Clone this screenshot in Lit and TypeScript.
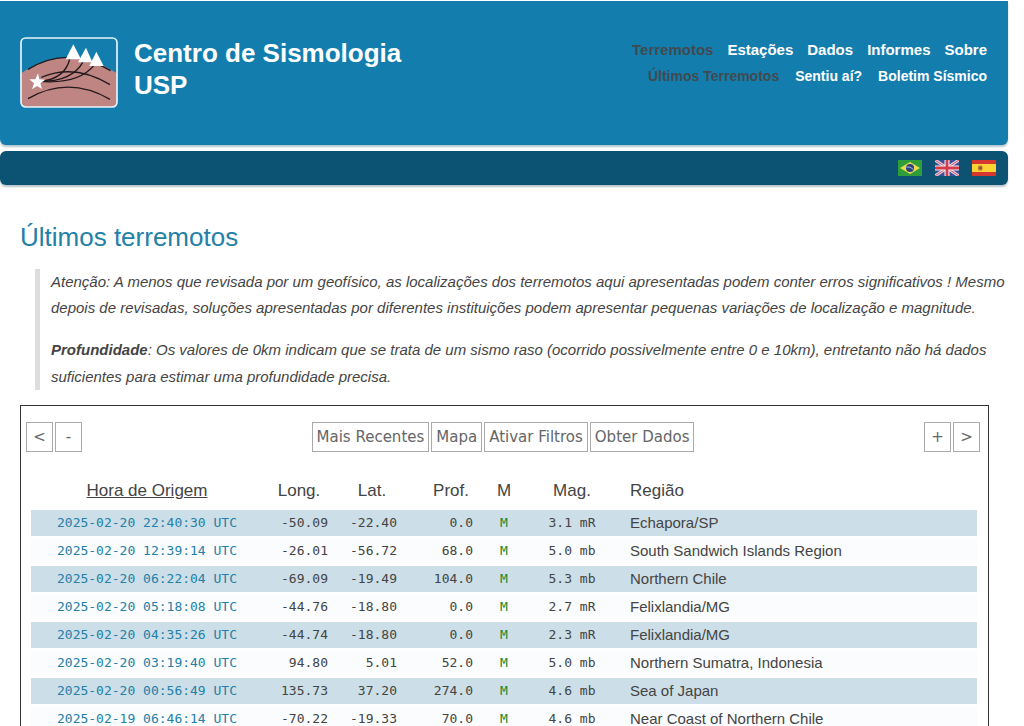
import { LitElement, html, css, svg } from "lit";
import { customElement, state } from "lit/decorators.js";

interface Quake {
  time: string;
  lon: string;
  lat: string;
  depth: string;
  mag: string;
  region: string;
}

const QUAKES: Quake[] = [
  { time: "2025-02-20 22:40:30 UTC", lon: "-50.09", lat: "-22.40", depth: "0.0", mag: "3.1 mR", region: "Echapora/SP" },
  { time: "2025-02-20 12:39:14 UTC", lon: "-26.01", lat: "-56.72", depth: "68.0", mag: "5.0 mb", region: "South Sandwich Islands Region" },
  { time: "2025-02-20 06:22:04 UTC", lon: "-69.09", lat: "-19.49", depth: "104.0", mag: "5.3 mb", region: "Northern Chile" },
  { time: "2025-02-20 05:18:08 UTC", lon: "-44.76", lat: "-18.80", depth: "0.0", mag: "2.7 mR", region: "Felixlandia/MG" },
  { time: "2025-02-20 04:35:26 UTC", lon: "-44.74", lat: "-18.80", depth: "0.0", mag: "2.3 mR", region: "Felixlandia/MG" },
  { time: "2025-02-20 03:19:40 UTC", lon: "94.80", lat: "5.01", depth: "52.0", mag: "5.0 mb", region: "Northern Sumatra, Indonesia" },
  { time: "2025-02-20 00:56:49 UTC", lon: "135.73", lat: "37.20", depth: "274.0", mag: "4.6 mb", region: "Sea of Japan" },
  { time: "2025-02-19 06:46:14 UTC", lon: "-70.22", lat: "-19.33", depth: "70.0", mag: "4.6 mb", region: "Near Coast of Northern Chile" },
];

const logo = html`<svg class="logo" viewBox="60 53 294 213" aria-hidden="true">
  <defs><clipPath id="frame"><rect x="63" y="56" width="288" height="207" rx="14" /></clipPath></defs>
  <g clip-path="url(#frame)">
    <path d="M60 164 Q205 66 354 164 V266 H60 Z" fill="#bf8583" />
    <g fill="none" stroke="#24191c" stroke-width="4">
      <path d="M84 150 Q205 76 332 154" />
      <path d="M124 174 Q225 132 330 196" />
      <path d="M84 238 Q205 168 330 240" />
      <path d="M118 186 Q196 180 210 116" />
      <path d="M118 186 Q216 188 250 126" />
      <path d="M118 186 Q236 196 284 136" />
    </g>
  </g>
  <g fill="#fff">
    <path d="M220 75 L243 120 H197 Z" />
    <path d="M258 85 L277 129 H234 Z" />
    <path d="M289 97 L311 140 H268 Z" />
    <path d="M114 162 L118 180 L136 181 L121 192 L126 209 L111 200 L96 210 L102 192 L88 180 L106 180 Z" />
  </g>
  <rect x="63" y="56" width="288" height="207" rx="14" fill="none" stroke="#e9f4fa" stroke-width="5" />
</svg>`;

const brazil = svg`<rect width="24" height="16" fill="#2f9e3a"/><path d="M12 2 L22 8 L12 14 L2 8 Z" fill="#e9dc4a"/><circle cx="12" cy="8" r="4" fill="#2b3f82"/><path d="M8.300 7 Q12 6 15.500 9.500" stroke="#a9b8d4" stroke-width="1" fill="none"/>`;
const britain = svg`<rect width="24" height="16" fill="#3d4f96"/><path d="M0 0 L24 16 M24 0 L0 16" stroke="#e6dce8" stroke-width="3"/><path d="M0 0 L24 16 M24 0 L0 16" stroke="#d4485a" stroke-width="1"/><path d="M12 0 V16 M0 8 H24" stroke="#f4eef2" stroke-width="5"/><path d="M12 0 V16 M0 8 H24" stroke="#d33c4c" stroke-width="2.800"/>`;
const spain = svg`<rect width="24" height="16" fill="#d5362f"/><rect y="4" width="24" height="8" fill="#fbd334"/><rect x="6" y="5.500" width="4.500" height="5" rx="1.500" fill="#b9752f"/><rect x="7.500" y="7" width="2" height="2" fill="#8f4a3c"/>`;

const FLAGS = [
  { label: "Português", art: brazil },
  { label: "English", art: britain },
  { label: "Español", art: spain },
];

@customElement("app-root")
export class AppRoot extends LitElement {
  @state() private quakes = QUAKES;

  static styles = css`
    :host {
      display: block;
      padding: 1px 16px 0 0;
      background: #fff;
      color: #444;
      font-family: "Liberation Sans", Arial, sans-serif;
      font-size: 15px;
    }
    a { color: inherit; text-decoration: none; }
    .masthead {
      display: flex;
      justify-content: space-between;
      align-items: flex-start;
      box-sizing: border-box;
      min-height: 144px;
      padding: 36px 21px 36px 20px;
      background: #137eae;
      color: #fff;
      border-radius: 0 0 6px 6px;
      box-shadow: 0 2px 2px #b4c6d0;
    }
    .brand { display: flex; gap: 16px; }
    .logo { display: block; width: 98px; height: 71px; }
    .name { margin: 0; font-size: 26px; line-height: 32px; font-weight: bold; }
    .menu { display: flex; flex-direction: column; font-weight: bold; line-height: 26px; }
    .menu ul {
      display: flex;
      justify-content: flex-end;
      gap: 14px;
      margin: 0;
      padding: 0;
      list-style: none;
    }
    .menu .submenu { gap: 16px; font-size: 14px; }
    .current { color: #404a50; }
    .languages {
      display: flex;
      justify-content: flex-end;
      align-items: center;
      gap: 13px;
      height: 34px;
      margin-top: 6px;
      padding: 0 12px;
      background: #0c5373;
      border-radius: 6px;
      box-shadow: 0 2px 2px #b9c3c9;
    }
    .flag { display: block; width: 24px; height: 16px; }
    main { padding: 36px 19px 0 20px; }
    h2 { margin: 0; color: #2380a8; font-size: 26px; line-height: 32px; font-weight: normal; }
    blockquote {
      display: flex;
      flex-direction: column;
      gap: 15px;
      margin: 16px -16px 15px 15px;
      padding: 0 0 0 11px;
      border-left: 5px solid #ddd;
      font-style: italic;
      line-height: 27px;
    }
    blockquote p { margin: 0; }
    blockquote p:first-child { line-height: 26px; }
    .panel { padding: 16px 8px 10px 5px; border: 1px solid #333; }
    .tools { display: flex; justify-content: space-between; }
    .group { display: flex; gap: 2px; }
    button {
      height: 30px;
      min-width: 27px;
      padding: 0 4px;
      border: 1px solid #aaa;
      background: #fff;
      color: #666;
      font-family: "DejaVu Sans", Verdana, sans-serif;
      font-size: 15px;
    }
    table {
      width: calc(100% - 8px);
      margin: 22px 3px 0 5px;
      table-layout: fixed;
      border-collapse: separate;
      border-spacing: 0 2px;
    }
    .c-time { width: 232px; }
    .c-lon { width: 72px; }
    .c-lat { width: 74px; }
    .c-depth { width: 84px; }
    .c-mode { width: 22px; }
    .c-mag { width: 114px; }
    th { height: 30px; padding: 0 0 2px; font-size: 17px; font-weight: normal; }
    td {
      height: 26px;
      padding: 0;
      font-family: "DejaVu Sans Mono", monospace;
      font-size: 13px;
      line-height: 26px;
      text-align: center;
      white-space: nowrap;
    }
    tbody tr { background: #fafcfd; }
    tbody tr:nth-child(odd) { background: #ccdee7; }
    .sorted { text-decoration: underline; }
    .time { color: #2380a8; }
    .lon, .lat, .depth { text-align: right; }
    .lon { padding-right: 7px; }
    .lat { padding-right: 12px; }
    .depth { padding-right: 20px; }
    .mode { color: #1d8a2b; }
    .region { text-align: left; padding-left: 1px; }
    td.region { font-family: "Liberation Sans", Arial, sans-serif; font-size: 15px; }
  `;

  render() {
    return html`
      <header class="masthead">
        <div class="brand">
          ${logo}
          <h1 class="name">Centro de Sismologia<br />USP</h1>
        </div>
        <nav class="menu">
          <ul>
            <li><a class="current" href="#terremotos">Terremotos</a></li>
            <li><a href="#estacoes">Estações</a></li>
            <li><a href="#dados">Dados</a></li>
            <li><a href="#informes">Informes</a></li>
            <li><a href="#sobre">Sobre</a></li>
          </ul>
          <ul class="submenu">
            <li><a class="current" href="#ultimos">Últimos Terremotos</a></li>
            <li><a href="#sentiu">Sentiu aí?</a></li>
            <li><a href="#boletim">Boletim Sísmico</a></li>
          </ul>
        </nav>
      </header>
      <div class="languages">
        ${FLAGS.map((f) => html`<a href="#" aria-label=${f.label}><svg class="flag" viewBox="0 0 24 16">${f.art}</svg></a>`)}
      </div>
      <main>
        <h2>Últimos terremotos</h2>
        <blockquote>
          <p>Atenção: A menos que revisada por um geofísico, as localizações dos terremotos aqui apresentadas podem conter erros significativos ! Mesmo depois de revisadas, soluções apresentadas por diferentes instituições podem apresentar pequenas variações de localização e magnitude.</p>
          <p><b>Profundidade</b>: Os valores de 0km indicam que se trata de um sismo raso (ocorrido possivelmente entre 0 e 10km), entretanto não há dados suficientes para estimar uma profundidade precisa.</p>
        </blockquote>
        <section class="panel">
          <div class="tools">
            <div class="group"><button>&lt;</button><button>-</button></div>
            <div class="group">
              <button>Mais Recentes</button><button>Mapa</button><button>Ativar Filtros</button><button>Obter Dados</button>
            </div>
            <div class="group"><button>+</button><button>&gt;</button></div>
          </div>
          <table>
            <colgroup>
              <col class="c-time" /><col class="c-lon" /><col class="c-lat" /><col class="c-depth" /><col class="c-mode" /><col class="c-mag" /><col />
            </colgroup>
            <thead>
              <tr>
                <th class="sorted">Hora de Origem</th>
                <th>Long.</th>
                <th>Lat.</th>
                <th>Prof.</th>
                <th>M</th>
                <th>Mag.</th>
                <th class="region">Região</th>
              </tr>
            </thead>
            <tbody>
              ${this.quakes.map(
                (q) => html`<tr>
                  <td><a class="time" href="#evento">${q.time}</a></td>
                  <td class="lon">${q.lon}</td>
                  <td class="lat">${q.lat}</td>
                  <td class="depth">${q.depth}</td>
                  <td class="mode">M</td>
                  <td>${q.mag}</td>
                  <td class="region">${q.region}</td>
                </tr>`
              )}
            </tbody>
          </table>
        </section>
      </main>
    `;
  }
}
